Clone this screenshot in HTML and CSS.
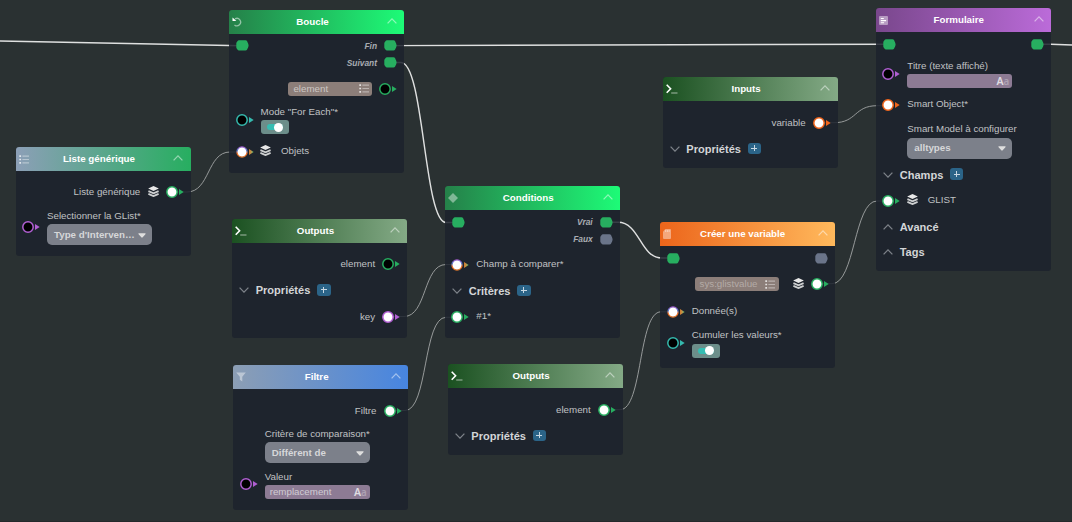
FILE: index.html
```html
<!DOCTYPE html>
<html lang="fr">
<head>
<meta charset="utf-8">
<title>Flow</title>
<link rel="stylesheet" href="styles.css">
</head>
<body>
<svg class="defs" width="0" height="0">
  <defs>
    <symbol id="port" viewBox="0 0 20 14"><circle cx="7" cy="7" r="5.2" fill="#000" stroke="currentColor" stroke-width="1.5"/><path d="M14 4 18.7 7 14 10z" fill="currentColor"/></symbol>
    <symbol id="port-on" viewBox="0 0 20 14"><circle cx="7" cy="7" r="5.2" fill="#fff" stroke="currentColor" stroke-width="1.5"/><path d="M14 4 18.7 7 14 10z" fill="currentColor"/></symbol>
    <symbol id="port-any" viewBox="0 0 20 14"><circle cx="7" cy="7" r="5.1" fill="#fff" stroke="url(#rainbow)" stroke-width="1.3"/><path d="M14 4 18.7 7 14 10z" fill="url(#warm)"/></symbol>
    <symbol id="exec" viewBox="0 0 13 11"><path d="M2.9.3h6.6q1 0 1.5.8l1.3 2.8q.6 1.5 0 3L11 9.7q-.5.8-1.5.8H2.9q-.8 0-1.3-.7L.7 8.6Q.3 8 .3 7.3V3.5q0-.7.4-1.3L1.6 1Q2.1.3 2.9.3z" fill="currentColor"/></symbol>
    <symbol id="stack" viewBox="0 0 11 11"><path d="M5.5 0 10.8 2.5 5.5 5 .2 2.5z" fill="#e8e8e8"/><path d="M.4 5.1 5.5 7.3l5.1-2.2M.4 7.9l5.1 2.2 5.1-2.2" fill="none" stroke="#cdcfd0" stroke-width="1.8"/></symbol>
    <symbol id="list" viewBox="0 0 10 9"><path d="M.3 1.2h1.8M.3 4.5h1.8M.3 7.8h1.8" stroke="#fff" stroke-opacity=".75" stroke-width="1.7"/><path d="M3.4 1.2H10M3.4 4.5H10M3.4 7.8H10" stroke="#fff" stroke-opacity=".4" stroke-width="1.2"/></symbol>
    <symbol id="up" viewBox="0 0 10 6"><path d="M.6 5.4 5 .9l4.4 4.5" fill="none" stroke="currentColor" stroke-width="1.3"/></symbol>
    <symbol id="down" viewBox="0 0 10 6"><path d="M.6.6 5 5.1 9.4.6" fill="none" stroke="currentColor" stroke-width="1.3"/></symbol>
    <symbol id="caret" viewBox="0 0 8 5"><path d="M.9.2h6.2q1 .2.3 1L4.7 4.3q-.7.7-1.4 0L.6 1.2Q-.1.4.9.2z" fill="#dedede"/></symbol>
    <symbol id="prompt" viewBox="0 0 12 10"><path d="M.7.8 4.6 4.8.7 8.8" fill="none" stroke="#fff" stroke-width="1.6"/><path d="M5.2 8.9h6.3" stroke="#fff" stroke-opacity=".4" stroke-width="1.5"/></symbol>
    <symbol id="loop" viewBox="0 0 10 10"><path d="M3 1.9a3.7 3.7 0 1 1-.5 6" fill="none" stroke="#fff" stroke-opacity=".5" stroke-width="1.3"/><path d="M.5.5v3.6h3.9z" fill="#fff"/></symbol>
    <symbol id="diamond" viewBox="0 0 10 10"><path d="M5 0 10 5 5 10 0 5z" fill="#fff" fill-opacity=".42"/></symbol>
    <symbol id="funnel" viewBox="0 0 10 9"><path d="M.2 0h9.6L6.3 4.2V9L3.8 7.2v-3z" fill="#fff" fill-opacity=".42"/></symbol>
    <symbol id="card" viewBox="0 0 8 10"><path d="M2.4 0H7q1 0 1 1v8q0 1-1 1H1Q0 10 0 9V2.4z" fill="#fff" fill-opacity=".42"/><path d="M2.7 1v2M4.4 1v2M6.1 1v2" stroke="#fff" stroke-opacity=".5" stroke-width=".9"/></symbol>
    <symbol id="form" viewBox="0 0 9 9"><rect width="9" height="9" rx="1" fill="#fff" fill-opacity=".45"/><path d="M1.8 2.5h3M1.8 4.6h5.3M1.8 6.7h3.3" stroke="#fff" stroke-width="1.1"/></symbol>
    <linearGradient id="rainbow" x1="0" y1="0" x2="0" y2="1"><stop stop-color="#a45bd0"/><stop offset=".35" stop-color="#5273c8"/><stop offset=".65" stop-color="#f06a1d"/><stop offset="1" stop-color="#e0762a"/></linearGradient>
    <linearGradient id="warm" x1="0" y1="0" x2="1" y2="0"><stop stop-color="#d8762b"/><stop offset=".5" stop-color="#b99a4c"/><stop offset="1" stop-color="#3cb878"/></linearGradient>
  </defs>
</svg>

<main class="canvas">
  <svg class="wires" viewBox="0 0 1072 522">
    <g class="wire-exec">
      <path d="M0 41 242 45.8"/>
      <path d="M390 45.6 889 44.2"/>
      <path d="M1037 44.2 1051 44.3 1072 45"/>
      <path d="M390 62.5H401C424 62.5 424 222.5 446 222.5H458"/>
      <path d="M606 222.3H618C640 222.3 640 258 662 258H673"/>
    </g>
    <g class="wire-data">
      <path d="M172 192H187C210 192 207 152 230 152H242"/>
      <path d="M388 316.5H404C427 316.5 423 264.5 446 264.5H458"/>
      <path d="M390 410.5H405C428 410.5 423 317.3 446 317.3H458"/>
      <path d="M604 409.7H620C643 409.7 638 311.8 661 311.8H673"/>
      <path d="M819 122.7H834C857 122.7 854 105.7 877 105.7H889"/>
      <path d="M816 283.7H832C855 283.7 854 201 877 201H889"/>
    </g>
  </svg>

  <section class="node glist">
    <header class="head"><svg class="i-list"><use href="#list"/></svg><h2>Liste générique</h2><svg class="i-chev"><use href="#up"/></svg></header>
    <div class="body">
      <div class="row out"><span class="wide">Liste générique</span><svg class="i-stack"><use href="#stack"/></svg><svg class="port green"><use href="#port-on"/></svg></div>
      <div class="field"><svg class="port violet"><use href="#port"/></svg><div class="stackd"><label>Selectionner la GList*</label><div class="select"><span>Type d'Interven…</span><svg class="i-caret"><use href="#caret"/></svg></div></div></div>
    </div>
  </section>

  <section class="node loop">
    <header class="head"><svg class="i-sq"><use href="#loop"/></svg><h2>Boucle</h2><svg class="i-chev"><use href="#up"/></svg></header>
    <div class="body">
      <div class="row flow"><svg class="exec"><use href="#exec"/></svg><em>Fin</em><svg class="exec"><use href="#exec"/></svg></div>
      <div class="row flow"><em>Suivant</em><svg class="exec"><use href="#exec"/></svg></div>
      <div class="row out"><div class="chip"><span>element</span><svg class="i-list"><use href="#list"/></svg></div><svg class="port green"><use href="#port"/></svg></div>
      <div class="field"><svg class="port teal"><use href="#port"/></svg><div class="stackd"><label>Mode "For Each"*</label><div class="toggle"><i></i></div></div></div>
      <div class="row in"><svg class="port"><use href="#port-any"/></svg><svg class="i-stack"><use href="#stack"/></svg><span class="after">Objets</span></div>
    </div>
  </section>

  <section class="node outputs-a">
    <header class="head term"><svg class="i-prompt"><use href="#prompt"/></svg><h2>Outputs</h2><svg class="i-chev"><use href="#up"/></svg></header>
    <div class="body">
      <div class="row out"><span>element</span><svg class="port green"><use href="#port"/></svg></div>
      <div class="row section"><svg class="i-chev"><use href="#down"/></svg><h3>Propriétés</h3><b class="add"></b></div>
      <div class="row out"><span>key</span><svg class="port violet"><use href="#port-on"/></svg></div>
    </div>
  </section>

  <section class="node filter">
    <header class="head"><svg class="i-sq"><use href="#funnel"/></svg><h2>Filtre</h2><svg class="i-chev"><use href="#up"/></svg></header>
    <div class="body">
      <div class="row out"><span>Filtre</span><svg class="port green"><use href="#port-on"/></svg></div>
      <div class="field bare"><div class="stackd"><label>Critère de comparaison*</label><div class="select"><span>Différent de</span><svg class="i-caret"><use href="#caret"/></svg></div></div></div>
      <div class="field"><svg class="port violet"><use href="#port"/></svg><div class="stackd"><label>Valeur</label><div class="input"><span>remplacement</span><span class="aa">A<small>a</small></span></div></div></div>
    </div>
  </section>

  <section class="node cond">
    <header class="head"><svg class="i-sq"><use href="#diamond"/></svg><h2>Conditions</h2><svg class="i-chev"><use href="#up"/></svg></header>
    <div class="body">
      <div class="row flow"><svg class="exec"><use href="#exec"/></svg><em>Vrai</em><svg class="exec"><use href="#exec"/></svg></div>
      <div class="row flow"><em>Faux</em><svg class="exec off"><use href="#exec"/></svg></div>
      <div class="row in"><svg class="port"><use href="#port-any"/></svg><span>Champ à comparer*</span></div>
      <div class="row section"><svg class="i-chev"><use href="#down"/></svg><h3>Critères</h3><b class="add"></b></div>
      <div class="row in"><svg class="port green"><use href="#port-on"/></svg><span>#1*</span></div>
    </div>
  </section>

  <section class="node outputs-b">
    <header class="head term"><svg class="i-prompt"><use href="#prompt"/></svg><h2>Outputs</h2><svg class="i-chev"><use href="#up"/></svg></header>
    <div class="body">
      <div class="row out"><span>element</span><svg class="port green"><use href="#port-on"/></svg></div>
      <div class="row section"><svg class="i-chev"><use href="#down"/></svg><h3>Propriétés</h3><b class="add"></b></div>
    </div>
  </section>

  <section class="node inputs">
    <header class="head term"><svg class="i-prompt"><use href="#prompt"/></svg><h2>Inputs</h2><svg class="i-chev"><use href="#up"/></svg></header>
    <div class="body">
      <div class="row out"><span>variable</span><svg class="port orange"><use href="#port-on"/></svg></div>
      <div class="row section"><svg class="i-chev"><use href="#down"/></svg><h3>Propriétés</h3><b class="add"></b></div>
    </div>
  </section>

  <section class="node variable">
    <header class="head"><svg class="i-card"><use href="#card"/></svg><h2>Créer une variable</h2><svg class="i-chev"><use href="#up"/></svg></header>
    <div class="body">
      <div class="row flow"><svg class="exec"><use href="#exec"/></svg><svg class="exec off end"><use href="#exec"/></svg></div>
      <div class="row out"><div class="chip faded"><span>sys:glistvalue</span><svg class="i-list"><use href="#list"/></svg></div><svg class="i-stack"><use href="#stack"/></svg><svg class="port green"><use href="#port-on"/></svg></div>
      <div class="row in"><svg class="port"><use href="#port-any"/></svg><span>Donnée(s)</span></div>
      <div class="field"><svg class="port teal"><use href="#port"/></svg><div class="stackd"><label>Cumuler les valeurs*</label><div class="toggle"><i></i></div></div></div>
    </div>
  </section>

  <section class="node form">
    <header class="head"><svg class="i-form"><use href="#form"/></svg><h2>Formulaire</h2><svg class="i-chev"><use href="#up"/></svg></header>
    <div class="body">
      <div class="row flow"><svg class="exec"><use href="#exec"/></svg><svg class="exec end"><use href="#exec"/></svg></div>
      <div class="field"><svg class="port violet"><use href="#port"/></svg><div class="stackd"><label>Titre (texte affiché)</label><div class="input"><span></span><span class="aa">A<small>a</small></span></div></div></div>
      <div class="row in"><svg class="port orange"><use href="#port-on"/></svg><span>Smart Object*</span></div>
      <div class="field bare"><div class="stackd"><label>Smart Model à configurer</label><div class="select"><span>alltypes</span><svg class="i-caret"><use href="#caret"/></svg></div></div></div>
      <div class="row section"><svg class="i-chev"><use href="#down"/></svg><h3>Champs</h3><b class="add"></b></div>
      <div class="row in"><svg class="port green"><use href="#port-on"/></svg><svg class="i-stack"><use href="#stack"/></svg><span class="after">GLIST</span></div>
      <div class="row section"><svg class="i-chev"><use href="#up"/></svg><h3>Avancé</h3></div>
      <div class="row section"><svg class="i-chev"><use href="#up"/></svg><h3>Tags</h3></div>
    </div>
  </section>
</main>
</body>
</html>
```
FILE: styles.css
```css
* { box-sizing: border-box; }
body { margin: 0; background: #2a3132; font-family: "Liberation Sans", Arial, sans-serif; font-size: 9.75px; color: #c0c2c4; }
.defs { position: absolute; }
svg { display: block; flex: none; }
.canvas { position: relative; width: 1072px; height: 522px; overflow: hidden; border-bottom: 1px solid #24292b; }

.wires { position: absolute; left: 0; top: 0; width: 1072px; height: 522px; fill: none; }
.wire-exec { stroke: #dfe0e0; stroke-width: 1.4; }
.wire-data { stroke: #a3a6a6; stroke-width: .9; }

/* Nodes sit freely on the canvas */
.node { position: absolute; width: 175px; border-radius: 3px; overflow: hidden; background: rgba(28, 34, 44, .86); }
.glist { left: 15.7px; top: 147px; height: 108.5px; }
.loop { left: 229.3px; top: 9.5px; height: 163.3px; }
.outputs-a { left: 232px; top: 219px; height: 118.5px; }
.filter { left: 233.4px; top: 365px; height: 144.7px; }
.cond { left: 445px; top: 186px; height: 152px; }
.outputs-b { left: 447.6px; top: 364.4px; height: 90.8px; }
.inputs { left: 662.6px; top: 77.3px; height: 90.8px; }
.variable { left: 660.4px; top: 221.5px; height: 146.6px; }
.form { left: 876px; top: 8px; height: 263px; }

.head { display: flex; align-items: center; justify-content: space-between; height: 24px; padding: 0 7.5px 0 3px; color: rgba(255, 255, 255, .48); }
.head h2 { flex: 1; margin: 0; padding-right: 4px; text-align: center; font-size: 9.75px; line-height: 14px; color: #fff; }
.head.term h2 { padding-right: 5.5px; }
.head .i-chev { margin-bottom: 2px; }
.glist .head { background: linear-gradient(90deg, #8c9fb7, #27ae60); }
.loop .head, .cond .head { background: linear-gradient(90deg, #258049, #1dfb77); }
.filter .head { background: linear-gradient(90deg, #8c9eb4, #4785e0); }
.variable .head { background: linear-gradient(90deg, #ec651b, #ffb95c); }
.form .head { background: linear-gradient(90deg, #79478c, #bb6bd9); }
.head.term { background: linear-gradient(90deg, #1b5121, #84aa86); }

.body { display: flex; flex-direction: column; }
.row { display: flex; align-items: center; height: 14px; line-height: 14px; white-space: nowrap; }
.in { padding-left: 5.3px; gap: 6px; }
.in span { padding-bottom: 2px; }
.out { justify-content: flex-end; padding-right: 5.9px; gap: 6px; }
.out .i-stack { margin-left: 1.5px; }
.out .wide { margin-left: 0; }
.flow { justify-content: flex-end; padding: 0 7.3px 0 7px; gap: 7px; }
.flow .exec:first-child { margin-right: auto; }
.flow em { font-size: 8.4px; font-weight: bold; color: #a9acb2; }
.section { padding-left: 7px; gap: 6.7px; color: #7b8087; }
.section h3 { margin: 0; font-size: 11.05px; line-height: 14px; color: #d3d5d7; }
.after { margin-left: 3.4px; }

.field { display: flex; align-items: center; padding-left: 5.3px; gap: 6px; }
.field.bare { padding-left: 31.3px; }
.stackd { display: flex; flex-direction: column; gap: 1.6px; }
.stackd label { height: 14px; line-height: 14px; white-space: nowrap; }
.select { display: flex; align-items: center; justify-content: space-between; width: 105px; height: 21px; padding: 0 6px 1px 7px; border-radius: 5px; background: #7c808a; color: #d6d7d9; font-weight: bold; white-space: nowrap; }
.input { display: flex; align-items: center; justify-content: space-between; width: 105px; height: 14px; padding: 0 3px 0 5px; border-radius: 3px; background: #8d7b94; color: #d0cbd3; line-height: 14px; }
.aa { font-family: "Noto Sans", sans-serif; font-size: 10.5px; font-weight: 600; color: #dfdce1; }
.aa small { font-size: 9.75px; opacity: .4; }
.chip { display: flex; align-items: center; justify-content: space-between; width: 84px; height: 14px; padding: 0 3.5px 0 5px; border-radius: 3px; background: #8c7e79; color: #cdc7c4; }
.chip.faded { margin-right: 6.5px; }
.chip.faded span { color: #b4aba7; }
.toggle { display: flex; align-items: center; width: 28px; height: 14px; padding-left: 6px; border-radius: 3px; background: #6c8e8a; }
.toggle i { display: flex; justify-content: flex-end; align-items: center; width: 16.5px; height: 6px; border-radius: 3px; background: #35bdb2; }
.toggle i::after { content: ""; flex: none; width: 9px; height: 9px; border-radius: 50%; background: #fff; }
.add { display: grid; place-items: center; width: 13.5px; height: 11.4px; margin-bottom: 1px; border-radius: 3px; background: #2b6488; }
.add::before, .add::after { content: ""; grid-area: 1 / 1; background: #c8d8e3; }
.add::before { width: 6px; height: 1px; }
.add::after { width: 1px; height: 6px; }

.port { width: 20px; height: 14px; }
.exec { width: 13px; height: 11px; color: #27ae60; }
.exec.off { color: #6a7489; }
.green { color: #27ae60; }
.violet { color: #b15fd3; }
.teal { color: #35b9ae; }
.orange { color: #f0641a; }
.i-list { width: 10px; height: 9px; }
.i-stack { width: 11px; height: 11px; margin-bottom: 1px; }
.in .i-stack { margin: 0 .5px 3px -.5px; }
.i-chev { width: 10px; height: 6px; }
.i-caret { width: 8px; height: 5px; margin-top: 2px; }
.i-prompt { width: 12px; height: 10px; }
.i-sq { width: 10px; height: 10px; }
.i-card { width: 8px; height: 10px; }
.i-form { width: 9px; height: 9px; }

/* Vertical rhythm of each node */
.glist .row { margin-top: 14px; }
.glist .field { margin-top: 9.7px; }
.loop .row:nth-child(1) { margin-top: 5px; }
.loop .row:nth-child(2) { margin-top: 3px; }
.loop .row:nth-child(3) { margin-top: 12.3px; }
.loop .field { margin-top: 9px; }
.loop .row:nth-child(5) { margin-top: 10.2px; }
.outputs-a .row:nth-child(1) { margin-top: 14.4px; }
.outputs-a .row:nth-child(2) { margin-top: 12px; }
.outputs-a .row:nth-child(3) { margin-top: 12.2px; }
.filter .row { margin-top: 14.5px; }
.filter .field:nth-child(2) { margin-top: 9.3px; }
.filter .field:nth-child(3) { margin-top: 6.2px; }
.cond .row:nth-child(1) { margin-top: 5.3px; }
.cond .row:nth-child(2) { margin-top: 2.8px; }
.cond .row:nth-child(3) { margin-top: 11.6px; }
.cond .row:nth-child(4) { margin-top: 12.3px; }
.cond .row:nth-child(5) { margin-top: 12.3px; }
.outputs-b .row, .inputs .row { margin-top: 14.5px; }
.outputs-b .section, .inputs .section { margin-top: 12px; }
.variable .row:nth-child(1) { margin-top: 5.5px; }
.variable .row:nth-child(2) { margin-top: 12px; }
.variable .row:nth-child(3) { margin-top: 13.8px; }
.variable .field { margin-top: 9.4px; }
.form .row:nth-child(1) { margin-top: 5.3px; }
.form .field:nth-child(2) { margin-top: 7.5px; }
.form .row:nth-child(3) { margin-top: 10px; }
.form .field:nth-child(4) { margin-top: 9.6px; }
.form .row:nth-child(5) { margin-top: 9px; }
.form .row:nth-child(6) { margin-top: 12px; }
.form .row:nth-child(7) { margin-top: 12px; }
.form .row:nth-child(8) { margin-top: 11px; }
```
